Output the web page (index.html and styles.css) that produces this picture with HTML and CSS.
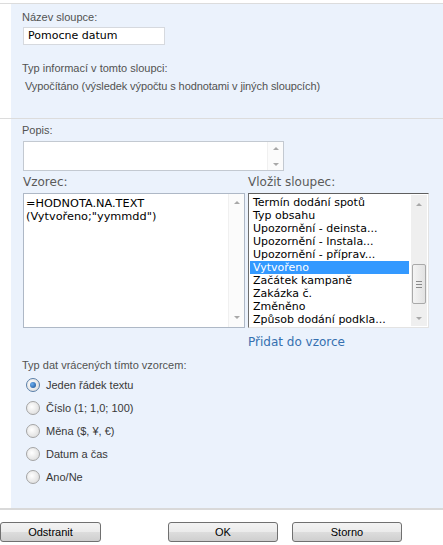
FILE: index.html
```html
<!DOCTYPE html>
<html lang="cs">
<head>
    <meta charset="UTF-8">
    <title>Vlastnosti sloupce</title>
    <link rel="stylesheet" href="styles.css">
</head>
<body>
    <div class="section">
        <div class="panel panel-top">
            <div class="label">Název sloupce:</div>
            <div class="name-input">Pomocne datum</div>
            <div class="label type-label">Typ informací v tomto sloupci:</div>
            <div class="label type-value">Vypočítáno (výsledek výpočtu s hodnotami v jiných sloupcích)</div>
        </div>
    </div>

    <div class="section section-bottom">
        <div class="panel panel-main">
            <div class="label">Popis:</div>
            <div class="desc-box">
                <div class="desc-text"></div>
                <div class="soft-bar">
                    <span class="arrow-up"></span>
                    <span class="arrow-down"></span>
                </div>
            </div>

            <div class="formula-grid">
                <div class="big-label">Vzorec:</div>
                <div class="big-label">Vložit sloupec:</div>

                <div class="formula-box">
                    <div class="formula-text">=HODNOTA.NA.TEXT<br>(Vytvořeno;"yymmdd")</div>
                    <div class="soft-bar">
                        <span class="arrow-up"></span>
                        <span class="arrow-down"></span>
                    </div>
                </div>

                <div class="list-box">
                    <ul class="list-items">
                        <li>Termín dodání spotů</li>
                        <li>Typ obsahu</li>
                        <li>Upozornění - deinsta...</li>
                        <li>Upozornění - Instala...</li>
                        <li>Upozornění - příprav...</li>
                        <li class="selected">Vytvořeno</li>
                        <li>Začátek kampaně</li>
                        <li>Zakázka č.</li>
                        <li>Změněno</li>
                        <li>Způsob dodání podkla...</li>
                    </ul>
                    <div class="list-bar">
                        <span class="arrow-up"></span>
                        <div class="thumb">
                            <span></span><span></span><span></span>
                        </div>
                        <span class="arrow-down"></span>
                    </div>
                </div>

                <div></div>
                <a class="add-link" href="#">Přidat do vzorce</a>
            </div>

            <div class="label return-label">Typ dat vrácených tímto vzorcem:</div>
            <div class="radio-list">
                <div class="radio-row"><span class="radio checked"></span>Jeden řádek textu</div>
                <div class="radio-row"><span class="radio"></span>Číslo (1; 1,0; 100)</div>
                <div class="radio-row"><span class="radio"></span>Měna ($, ¥, €)</div>
                <div class="radio-row"><span class="radio"></span>Datum a čas</div>
                <div class="radio-row"><span class="radio"></span>Ano/Ne</div>
            </div>
        </div>
    </div>

    <div class="buttons">
        <button class="btn btn-delete">Odstranit</button>
        <button class="btn btn-ok">OK</button>
        <button class="btn btn-cancel">Storno</button>
    </div>
</body>
</html>
```

FILE: styles.css
```css
body {
    margin: 0;
    padding-top: 3px;
    background: #ffffff;
    font-family: "Liberation Sans", Arial, sans-serif;
    font-size: 11px;
    color: #525252;
    overflow: hidden;
}

.section {
    border-top: 1px solid #dcdcdc; /* grey rule across the whole width */
}

.section-bottom {
    border-bottom: 2px solid #d9d9d9;
}

.panel {
    margin-left: 11px;
    background: #ebf2fc; /* light blue form body */
    padding-left: 11px;
    box-sizing: border-box;
}

.panel-top {
    height: 114px;
    padding-top: 6px;
}

.panel-main {
    height: 389px;
    padding-top: 4px;
}

.label {
    line-height: 14px;
}

.name-input {
    margin: 3px 0 0 1px;
    width: 142px;
    height: 18px;
    box-sizing: border-box;
    border: 1px solid #d6d9de;
    background: #ffffff;
    padding-left: 4px;
    font-family: "DejaVu Sans", Verdana, sans-serif;
    font-size: 11px;
    line-height: 16px;
    color: #000000;
}

.type-label {
    margin-top: 16px;
}

.type-value {
    margin-top: 4px;
    padding-left: 3px;
    letter-spacing: -0.1px;
}

/* description box */
.desc-box {
    margin: 4px 0 0 1px;
    width: 261px;
    height: 30px;
    box-sizing: border-box;
    border: 1px solid #c3c9d1;
    background: #ffffff;
    display: flex;
}

.desc-text {
    flex: 1;
}

.soft-bar {
    width: 15px;
    display: flex;
    flex-direction: column;
    justify-content: space-between;
    align-items: center;
    padding: 5px 0 4px;
    background: #fbfbfb;
    border-left: 1px solid #f0f0f0;
}

.arrow-up {
    width: 0;
    height: 0;
    border-left: 3px solid transparent;
    border-right: 3px solid transparent;
    border-bottom: 3px solid #a8a8a8;
}

.arrow-down {
    width: 0;
    height: 0;
    border-left: 3px solid transparent;
    border-right: 3px solid transparent;
    border-top: 3px solid #a8a8a8;
}

/* formula + column picker */
.formula-grid {
    margin: 4px 0 0 1px;
    display: grid;
    grid-template-columns: 222px 181px;
    column-gap: 3px;
    row-gap: 4px;
}

.big-label {
    font-family: "DejaVu Sans", Verdana, sans-serif;
    font-size: 12px;
    line-height: 14px;
    color: #5a5a5a;
}

.formula-box {
    height: 135px;
    box-sizing: border-box;
    border: 1px solid #aeb8c6;
    background: #ffffff;
    display: flex;
}

.formula-text {
    flex: 1;
    padding: 3px 0 0 2px;
    font-family: "DejaVu Sans", Verdana, sans-serif;
    font-size: 11.3px;
    line-height: 13px;
    color: #000000;
}

.formula-box .soft-bar {
    padding: 7px 0 8px;
}

.list-box {
    height: 135px;
    box-sizing: border-box;
    border-top: 1px solid #5f5f5f;
    border-left: 1px solid #6e6e6e;
    border-right: 1px solid #e3e3e3;
    border-bottom: 1px solid #e3e3e3;
    background: #ffffff;
    display: flex;
}

.list-items {
    flex: 1;
    margin: 0;
    padding: 2px 0 0 1px;
    list-style: none;
    font-family: "DejaVu Sans", Verdana, sans-serif;
    font-size: 11px;
    line-height: 13px;
    color: #000000;
}

.list-items li {
    padding-left: 3px;
    white-space: nowrap;
}

.list-items .selected {
    background: #3399ff;
    color: #ffffff;
}

.list-bar {
    width: 16px;
    margin: 1px 1px 1px 2px;
    background: #efefef;
    display: flex;
    flex-direction: column;
    align-items: center;
    padding: 8px 0 6px;
    box-sizing: border-box;
}

.thumb {
    margin: 58px 0 auto;
    width: 14px;
    height: 40px;
    box-sizing: border-box;
    border: 1px solid #a9a9a9;
    border-radius: 2px;
    background: linear-gradient(to right, #f4f4f4, #e2e2e2);
    display: flex;
    flex-direction: column;
    justify-content: center;
    align-items: center;
    gap: 2px;
}

.thumb span {
    width: 6px;
    height: 1px;
    background: #8a8a8a;
}

.add-link {
    margin-top: 3px;
    font-family: "DejaVu Sans", Verdana, sans-serif;
    font-size: 12px;
    line-height: 14px;
    color: #3570b0;
    text-decoration: none;
}

/* return type radios */
.return-label {
    margin-top: 9px;
}

.radio-list {
    margin-top: 1px;
}

.radio-row {
    height: 23px;
    display: flex;
    align-items: center;
    padding-left: 4px;
    color: #383838;
}

.radio {
    width: 12px;
    height: 12px;
    border-radius: 50%;
    border: 1px solid #a4a4a4;
    background: radial-gradient(circle at 40% 40%, #ffffff, #d6d6d6);
    margin-right: 6px;
    display: flex;
    align-items: center;
    justify-content: center;
}

.radio.checked {
    border-color: #5a7fa8;
}

.radio.checked::after {
    content: "";
    width: 6px;
    height: 6px;
    border-radius: 50%;
    background: radial-gradient(circle at 35% 35%, #6aaef0, #1b4f91);
}

/* footer buttons */
.buttons {
    margin-top: 12px;
    display: flex;
}

.btn {
    height: 20px;
    padding: 0;
    border: 1px solid #707070;
    border-radius: 3px;
    background: linear-gradient(#f3f3f3, #ebebeb 50%, #dddddd 50%, #cfcfcf);
    font-family: "Liberation Sans", Arial, sans-serif;
    font-size: 11px;
    color: #000000;
}

.btn-delete {
    width: 101px;
}

.btn-ok {
    width: 110px;
    margin-left: 67px;
}

.btn-cancel {
    width: 110px;
    margin-left: 14px;
}
```
